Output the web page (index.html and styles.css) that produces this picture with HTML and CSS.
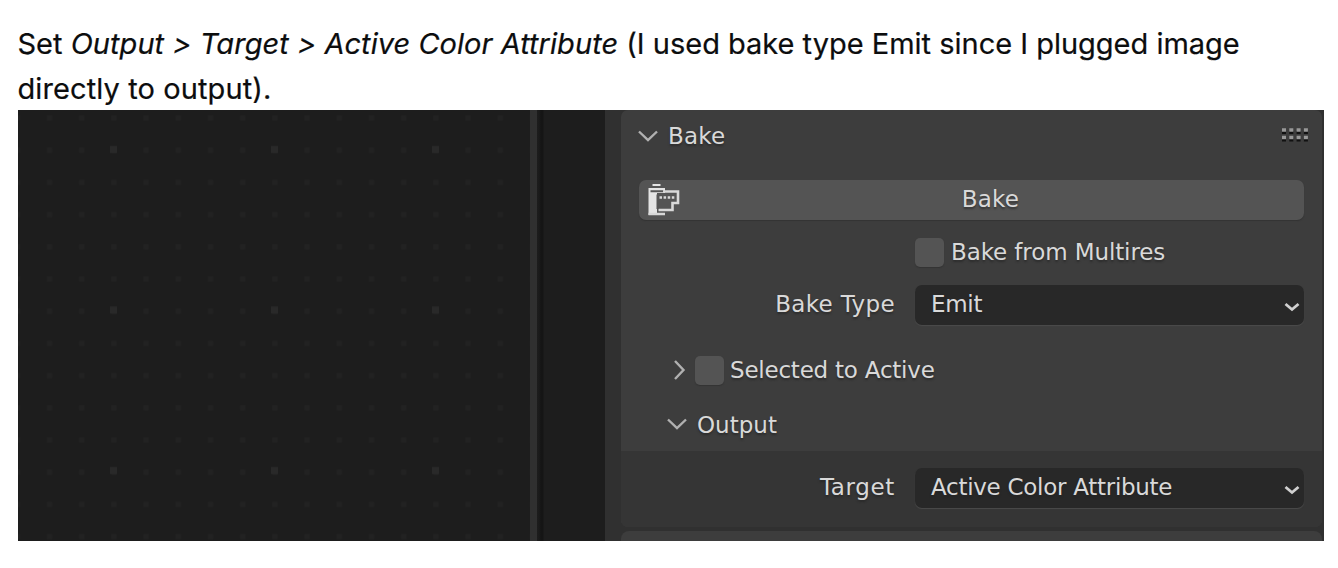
FILE: index.html
```
<!DOCTYPE html>
<html lang="en">
<head>
<meta charset="utf-8">
<title>Bake settings</title>
<link rel="stylesheet" href="styles.css">
</head>
<body>
<p class="intro"><span class="line first">Set <em>Output &gt; Target &gt; Active Color Attribute</em> (I used bake type Emit since I plugged image</span> <span class="line second">directly to output).</span></p>
<main class="shot">
  <svg class="canvas" width="512" height="431">
    <defs>
      <pattern id="dots" x="15" y="-8.5" width="32.2" height="32.2" patternUnits="userSpaceOnUse"><rect x="14" y="14" width="5" height="5" fill="#222"/></pattern>
      <pattern id="marks" x="15" y="-41" width="161" height="160.5" patternUnits="userSpaceOnUse"><rect x="77" y="77" width="7" height="7" fill="#292929"/></pattern>
    </defs>
    <rect width="512" height="431" fill="url(#dots)"/>
    <rect width="512" height="431" fill="url(#marks)"/>
  </svg>
  <div class="divider"></div>
  <div class="gutter"></div>
  <section class="props">
    <div class="panel">
      <header class="head">
        <svg class="chev" width="22" height="14" viewBox="0 0 22 14"><path d="M2 2.500l9 8.500 9-8.500"/></svg>
        <span class="t">Bake</span>
        <svg class="grip" width="26" height="14" viewBox="0 0 26 14"><path class="shade" d="M0 4.500h26M0 12h26"/><path class="grain" d="M0 2h26M0 9.500h26"/></svg>
      </header>
      <div class="button">
        <svg class="film" width="33" height="34" viewBox="0 0 33 34">
          <path class="solid" d="M5.500 1h8v2h-8zM1.500 5H18v5h-8v22H1.500z"/>
          <path class="slot" d="M3.500 8.200h13"/>
          <path class="edge" d="M1.500 31H18M16 8.500h15v11.500h-5.500v7H11.500"/>
          <path class="rim" d="M10.500 11.500H28v6.500M10.500 11.500V26"/>
          <path class="holes" d="M12.500 14.500h15"/>
        </svg>
        <span class="t">Bake</span>
      </div>
      <div class="row multires"><span class="box"></span><span class="t">Bake from Multires</span></div>
      <div class="row field"><span class="label t">Bake Type</span><div class="select"><span class="t emit">Emit</span><svg width="16" height="10" viewBox="0 0 16 10"><path d="M1.500 2L8 7.500 14.500 2"/></svg></div></div>
      <div class="row selected"><svg class="chev" width="14" height="22" viewBox="0 0 14 22"><path d="M3 2l8.500 9L3 20"/></svg><span class="box"></span><span class="t">Selected to Active</span></div>
      <div class="row output"><svg class="chev" width="22" height="14" viewBox="0 0 22 14"><path d="M2 2.500l9 8.500 9-8.500"/></svg><span class="t">Output</span></div>
      <div class="sub"><div class="row field"><span class="label target t">Target</span><div class="select"><span class="t attribute">Active Color Attribute</span><svg width="16" height="10" viewBox="0 0 16 10"><path d="M1.500 2L8 7.500 14.500 2"/></svg></div></div></div>
    </div>
    <div class="panel next"></div>
  </section>
</main>
</body>
</html>
```
FILE: styles.css
```
* { box-sizing: border-box; }
body { margin: 0; width: 1338px; height: 568px; overflow: hidden; background: #fff; padding: 21px 14px 0 17.500px; }
.intro { margin: 0; height: 89px; font: 29px/45px Inter, sans-serif; color: #0c0d0e; -webkit-text-stroke: .2px #0c0d0e; }
.line { display: block; white-space: nowrap; width: max-content; }
.first { letter-spacing: -.01px; }
.first em { letter-spacing: .04px; }
.second { letter-spacing: .1px; }
.shot { display: flex; width: 1306px; height: 431px; margin-left: .5px; overflow: hidden; background: #1d1d1d; }
.canvas { flex: none; }
.divider { width: 14px; background: linear-gradient(90deg, #303030 7px, #1d1d1d 7px, #1b1b1b 9px, #151515 11px, #151515 13px, #1d1d1d 14px); }
.gutter { width: 61px; }
.props { width: 719px; background: #303030; padding: 0 2px 0 16px; }
.panel { height: 417px; border-radius: 7px; background: #3d3d3d; overflow: hidden; }
.next { margin-top: 4px; height: 20px; border-radius: 8px 8px 0 0; }
.t { font: 23px/28px "DejaVu Sans", sans-serif; color: #d9d9d9; text-shadow: 0 2px 2px #2229; white-space: nowrap; }
.chev { flex: none; fill: none; stroke: #b0b0b0; stroke-width: 2.4; }
.head { display: flex; align-items: center; height: 52px; padding: 0 14px 0 16px; gap: 9px; }
.head .t { letter-spacing: .2px; }
.grip { margin-left: auto; margin-bottom: 2px; }
.grip path { stroke-width: 3.5; stroke-dasharray: 4 3.3; }
.grip .shade { stroke: #111; stroke-width: 3; }
.grain { stroke: #989898; }
.button { display: flex; align-items: center; height: 40px; margin: 18px 18px 0; padding-left: 8px; border-radius: 7px; background: #545454; box-shadow: 0 1px 1px #333; }
.button .t { flex: 1; text-align: center; padding-right: 3px; margin-bottom: 2px; letter-spacing: .2px; }
.film { flex: none; }
.film path { fill: none; }
.film .solid { fill: #e4e4e4; }
.slot { stroke: #555; stroke-width: 2; }
.edge { stroke: #d8d8d8; stroke-width: 2.6; }
.rim { stroke: #555; stroke-width: 2; }
.holes { stroke: #d8d8d8; stroke-width: 2.5; stroke-dasharray: 2.5 1.6; }
.row { display: flex; align-items: center; }
.box { flex: none; width: 29px; height: 29px; border-radius: 5px; background: #545454; box-shadow: 0 1px 1px #333; }
.multires { height: 29px; margin: 18px 0 0 294px; gap: 7px; }
.multires .t { margin-bottom: 2px; letter-spacing: -.1px; }
.selected .t { margin-bottom: 0; letter-spacing: -.22px; }
.field { height: 40px; margin: 18px 18px 0 0; }
.label { width: 274px; margin-right: 20px; text-align: right; margin-bottom: 2px; letter-spacing: .35px; }
.target { letter-spacing: .65px; }
.select { display: flex; align-items: center; justify-content: space-between; width: 389px; height: 40px; padding: 0 4px 0 16px; border-radius: 7px; background: #282828; box-shadow: 0 1px 1px #4b4b4b; }
.select .t { margin-bottom: 2px; }
.select .emit { letter-spacing: -.3px; }
.select .attribute { letter-spacing: -.28px; }
.select svg { margin-top: 3px; }
.select path { fill: none; stroke: #d0d0d0; stroke-width: 2.8; }
.selected { height: 30px; margin: 30px 0 0 51px; }
.selected .box { margin: 0 6px 0 9px; }
.output { height: 66px; padding: 13px 0 0 45px; gap: 9px; }
.output .chev { margin-bottom: 1px; }
.sub { height: 76px; padding-top: 17px; background: #353535; }
.sub .field { margin-top: 0; }
```
